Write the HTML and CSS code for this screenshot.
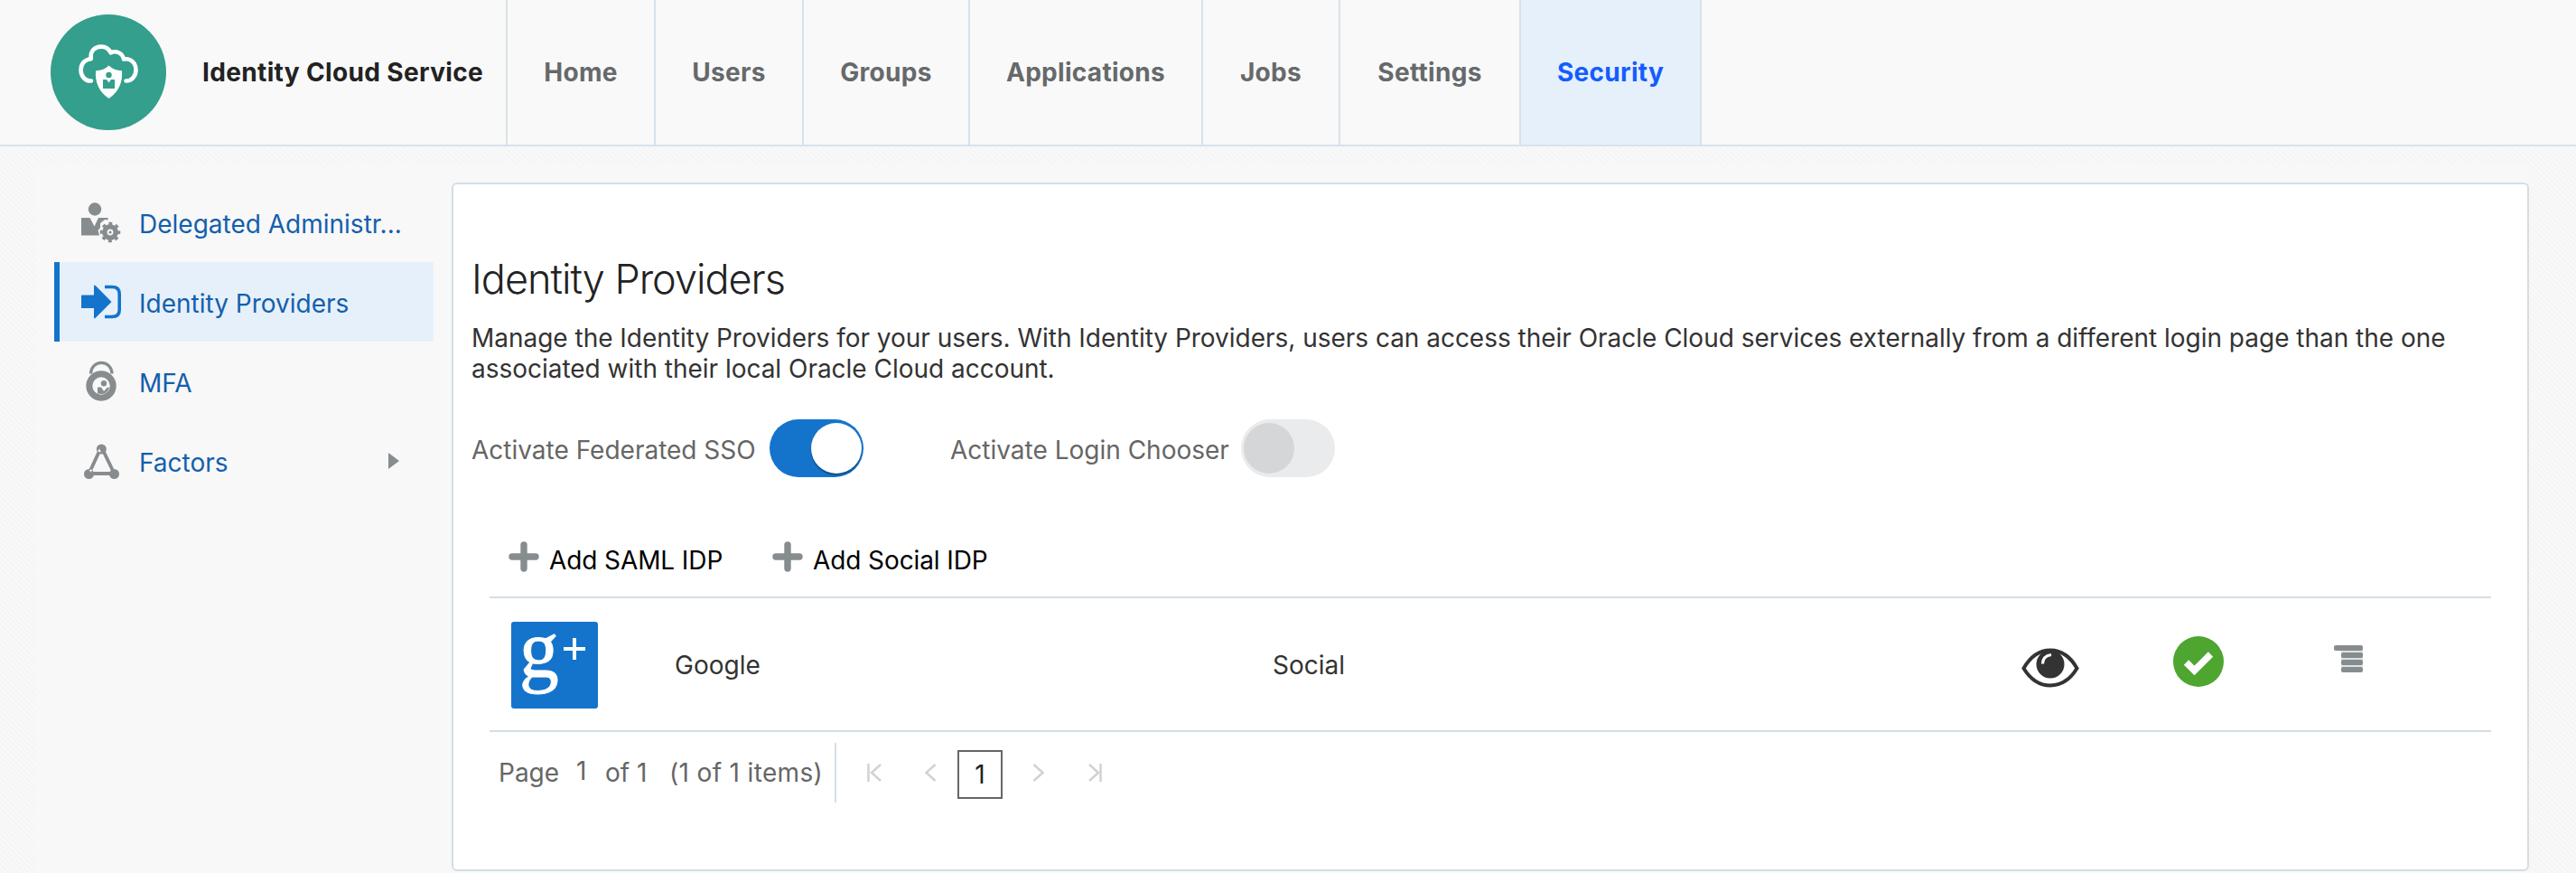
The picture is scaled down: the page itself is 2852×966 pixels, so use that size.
FILE: index.html
```html
<!DOCTYPE html>
<html lang="en">
<head>
<meta charset="utf-8">
<title>Identity Cloud Service</title>
<link rel="stylesheet" href="styles.css">
</head>
<body>
<header class="topbar">
  <div class="brand">
    <svg class="logo" viewBox="0 0 128 128">
      <circle cx="64" cy="64" r="64" fill="#339f8c"/>
      <path d="M45 73.500C38 74 33.500 68 33.500 61.500C33.500 54 38.500 49.500 44.800 49.200C43.500 41 48.500 35.600 56 35.600C61 35.600 64.500 38 66.500 42.300C72.500 39.500 79.500 42.500 81 49.500C89 48 94.500 54 94.500 61.500C94.500 68 90 73.500 83.500 73.500" fill="none" stroke="#fff" stroke-width="4.600" stroke-linecap="round" stroke-linejoin="round"/>
      <path d="M64.500 56.500Q70 62 79 62.200Q80.500 82 64.500 93Q48.500 82 50 62.200Q59 62 64.500 56.500Z" fill="#fff"/>
      <circle cx="64.500" cy="67" r="3.200" fill="#339f8c"/>
      <path d="M58 72H62L64.500 75.500L67 72H71V82H58Z" fill="#339f8c"/>
    </svg>
    <span class="brand-name">Identity Cloud Service</span>
  </div>
  <nav class="tabs">
    <a class="tab t-home"><span>Home</span></a>
    <a class="tab t-users"><span>Users</span></a>
    <a class="tab t-groups"><span>Groups</span></a>
    <a class="tab t-apps"><span>Applications</span></a>
    <a class="tab t-jobs"><span>Jobs</span></a>
    <a class="tab t-settings"><span>Settings</span></a>
    <a class="tab t-security active"><span>Security</span></a>
  </nav>
</header>
<div class="content">
  <aside class="sidebar">
    <a class="side-item">
      <svg class="side-icon" viewBox="0 0 44 44" fill="#878c8f">
        <circle cx="15" cy="7.500" r="7.200"/>
        <path d="M0 17H9.500L14.500 26.500L19 17H29.500V19.500L26 19L21 23V28L18.500 31L20 36.500H0Z"/>
        <circle cx="32" cy="33" r="6.200" fill="none" stroke="#878c8f" stroke-width="5.500"/>
        <circle cx="32" cy="33" r="9.300" fill="none" stroke="#878c8f" stroke-width="4" stroke-dasharray="3.650 3.650" stroke-dashoffset="1.800"/>
        <circle cx="32" cy="33" r="1.600"/>
      </svg>
      <span class="side-text">Delegated Administr...</span>
    </a>
    <a class="side-item selected">
      <svg class="side-icon" viewBox="0 0 44 44" fill="#1474cc">
        <path d="M0 15.500Q0 14.500 1 14.500H14V5Q14 2.500 16 4.300L33.500 22L16 39.500Q14 41.500 14 39V29H0Z"/>
        <path d="M26 5.500H34Q42.200 5.500 42.200 13V31Q42.200 38.500 34 38.500H26" fill="none" stroke="#1474cc" stroke-width="3.600"/>
      </svg>
      <span class="side-text">Identity Providers</span>
    </a>
    <a class="side-item">
      <svg class="side-icon" viewBox="0 0 44 44" fill="#878c8f">
        <path d="M10.500 13.500A11.700 12 0 0 1 34 13.500" fill="none" stroke="#878c8f" stroke-width="3.200"/>
        <circle cx="22" cy="27" r="13.200" fill="none" stroke="#878c8f" stroke-width="7"/>
        <circle cx="25" cy="24.200" r="3.200"/>
        <path d="M18 28.500H22L25 33L29 28.500L31 29Q29 35.500 23 36L18 35.500Z"/>
      </svg>
      <span class="side-text">MFA</span>
    </a>
    <a class="side-item">
      <svg class="side-icon" viewBox="0 0 44 44" fill="#878c8f">
        <path d="M21.500 8L8.500 36H36.500L23 8" fill="none" stroke="#878c8f" stroke-width="3.800"/>
        <circle cx="22.300" cy="9" r="5.500"/><circle cx="8.500" cy="36.500" r="5.500"/><circle cx="36.500" cy="36.500" r="5.500"/>
        <path d="M18 11.500L20 8.500L22 12.500ZM8.500 32L12 31.500L11 34.500Z" fill="#f8f8f8"/>
      </svg>
      <span class="side-text">Factors</span>
      <svg class="caret" viewBox="0 0 12 18"><path d="M0 0L12 9L0 18Z" fill="#878c8f"/></svg>
    </a>
  </aside>
  <main class="panel">
    <h1 class="heading"><span>Identity Providers</span></h1>
    <p class="intro"><span>Manage the Identity Providers for your users. With Identity Providers, users can access their Oracle Cloud services externally from a different login page than the one</span><br><span>associated with their local Oracle Cloud account.</span></p>
    <div class="switches">
      <span class="switch-label">Activate Federated SSO</span>
      <span class="switch on"><i class="thumb"></i></span>
      <span class="switch-label second">Activate Login Chooser</span>
      <span class="switch"><i class="thumb"></i></span>
    </div>
    <section class="listing">
      <div class="toolbar">
        <button class="add first"><svg class="plus" viewBox="0 0 32 32"><path d="M16 3V29M3 16H29" stroke="#878c8f" stroke-width="7.400" stroke-linecap="round"/></svg><span>Add SAML IDP</span></button>
        <button class="add"><svg class="plus" viewBox="0 0 32 32"><path d="M16 3V29M3 16H29" stroke="#878c8f" stroke-width="7.400" stroke-linecap="round"/></svg><span>Add Social IDP</span></button>
      </div>
      <div class="row">
        <svg class="gplus" viewBox="0 0 96 96">
          <rect width="96" height="96" rx="3" fill="#1474cc"/>
          <text class="gplus-g" transform="translate(9 61) scale(.96 1)">g</text>
          <path d="M70 18V42M58 30H82" fill="none" stroke="#fff" stroke-width="4"/>
        </svg>
        <span class="name">Google</span>
        <span class="type">Social</span>
        <svg class="eye" viewBox="0 0 64 44">
          <path d="M2.500 22.500Q14 2.500 32 2.500T61.500 22.500Q50 41.500 32 41.500T2.500 22.500Z" fill="#fff" stroke="#333" stroke-width="4"/>
          <circle cx="32" cy="18" r="15.500" fill="#333"/>
          <path d="M23.500 17.500Q23.500 9 33 7.500" stroke="#fff" stroke-width="3.200" fill="none"/>
        </svg>
        <svg class="check" viewBox="0 0 56 56"><circle cx="28" cy="28" r="28" fill="#4ea52f"/><path d="M14.500 29L23.500 38L41.500 20" fill="none" stroke="#fff" stroke-width="7.500"/></svg>
        <svg class="menu" viewBox="0 0 32 32"><path fill="#dfe1e2" d="M8 6H32V28H8Z"/><g fill="#878c8f"><rect y="1" width="32" height="6" rx="2"/><rect x="8" y="9" width="24" height="6" rx="2"/><rect x="8" y="17" width="24" height="6" rx="2"/><rect x="8" y="25" width="24" height="6" rx="2"/></g></svg>
      </div>
      <div class="pager">
        <span class="p-page">Page</span><span class="p-num">1</span><span class="p-of">of 1</span><span class="p-items">(1 of 1 items)</span>
        <span class="divider"></span>
        <svg class="nav-icon n-first" viewBox="0 0 16 20"><path d="M1.500 0V20M15 1L5 10L15 19" /></svg>
        <svg class="nav-icon n-prev" viewBox="0 0 12 20"><path d="M11.500 1L1.500 10L11.500 19"/></svg>
        <span class="current">1</span>
        <svg class="nav-icon n-next" viewBox="0 0 12 20"><path d="M.5 1L10.500 10L.5 19"/></svg>
        <svg class="nav-icon n-last" viewBox="0 0 16 20"><path d="M13.500 0V20M1 1L11 10L1 19"/></svg>
      </div>
    </section>
  </main>
</div>
</body>
</html>
```
FILE: styles.css
```css
* { box-sizing: border-box; }
html, body { margin: 0; height: 966px; overflow: hidden; }
body {
  font: 28px/34px Inter, "Liberation Sans", sans-serif;
  color: #333;
  background: repeating-linear-gradient(45deg, #f9f9f9 0 2px, #f5f5f5 2px 4px);
}
svg { display: block; flex: none; overflow: visible; }
span { white-space: nowrap; }
.topbar { display: flex; height: 162px; background: #f9f9f9; border-bottom: 2px solid #d8e2ea; }
.brand { display: flex; align-items: center; width: 560px; padding-left: 56px; flex: none; }
.logo { width: 128px; height: 128px; }
.brand-name { margin-left: 40px; font-weight: 700; color: #222; letter-spacing: 0.350px; }
.tabs { display: flex; }
.tab { display: flex; align-items: center; justify-content: center; border-left: 2px solid #d8e2ea; font-weight: 700; color: #66696b; letter-spacing: 0.300px; }
.t-home, .t-users { width: 164px; }
.t-groups { width: 184px; }
.t-apps { width: 258px; }
.t-jobs { width: 152px; }
.t-settings { width: 200px; }
.t-security { width: 202px; }
.tab.active { color: #145cff; background: #e6f0fa; border-right: 2px solid #d8e2ea; }

.content { display: flex; gap: 20px; width: 2760px; height: 784px; margin: 20px 0 0 40px; padding: 20px 0 0 20px; background: #f8f8f8; }
.sidebar { width: 420px; flex: none; }
.side-item { display: flex; align-items: center; height: 88px; padding: 0 38px 0 24px; border-left: 6px solid transparent; color: #145fad; }
.side-item.selected { background: #e6f0fa; border-left-color: #1474cc; }
.side-icon { width: 44px; height: 44px; margin-right: 20px; }
.side-text { padding-top: 4px; }
.caret { width: 12px; height: 18px; margin-left: auto; }

.panel { width: 2300px; height: 762px; padding: 0 40px 0 20px; background: #fff; border: 2px solid #d3dee6; border-radius: 6px; }
.heading { margin: 75px 0 0; font-weight: 300; font-size: 45px; line-height: 60px; color: #222; letter-spacing: -1px; }
.intro { margin: 18px 0 0; letter-spacing: -0.020px; }
.switches { display: flex; align-items: center; height: 64px; margin-top: 39px; color: #666; }
.switch { display: flex; align-items: center; width: 104px; height: 64px; margin-left: 15px; padding: 0 3px; border-radius: 32px; background: #eaebed; flex: none; }
.switch.on { background: #1474cc; justify-content: flex-end; padding-right: 2px; }
.switch-label { width: 315px; padding-top: 4px; }
.switch-label.second { margin-left: 96px; width: 307px; }
.thumb { width: 56px; height: 56px; border-radius: 50%; background: #d4d6d8; }
.on .thumb { background: #fff; box-shadow: 0 2px 2px rgba(0, 0, 0, .35); }

.listing { margin: 0 0 0 20px; padding-top: 72px; }
.toolbar { display: flex; height: 62px; border-bottom: 2px solid #d3dee6; padding-left: 22px; }
.add { display: flex; padding: 0; border: 0; background: none; font: inherit; color: #000; align-items: flex-start; letter-spacing: -0.100px; }
.add.first { width: 292px; }
.add span { margin: 3px 0 0 12px; }
.plus { width: 32px; height: 32px; }
.row { display: flex; height: 148px; border-bottom: 2px solid #d3dee6; padding: 26px 0 0 24px; }
.gplus { width: 96px; height: 96px; }
.gplus-g { font: 91px "Liberation Serif", serif; fill: #fff; stroke: #fff; stroke-width: 1; }
.name { width: 662px; margin: 31px 0 0 85px; }
.type { width: 829px; margin-top: 31px; }
.eye { width: 64px; height: 44px; margin-top: 29px; }
.check { width: 56px; height: 56px; margin: 16px 0 0 104px; }
.menu { width: 32px; height: 32px; margin: 25px 0 0 122px; }

.pager { display: flex; align-items: center; height: 92px; margin-top: -1px; padding-left: 10px; color: #666; }
.p-page { width: 86px; }
.p-num { width: 32px; padding-bottom: 4px; }
.p-of { width: 71px; }
.p-items { width: 183px; letter-spacing: 0.350px; }
.divider { width: 2px; height: 66px; background: #d6dfe7; }
.nav-icon { height: 20px; fill: none; stroke: #d0d2d3; stroke-width: 2.500; }
.n-first, .n-last { width: 16px; }
.n-prev, .n-next { width: 12px; }
.n-first { margin-left: 34px; }
.n-prev { margin-left: 48px; }
.current { display: flex; align-items: center; justify-content: center; width: 50px; height: 54px; margin: 4px 34px 0 24px; border: 2px solid #666; color: #222; }
.n-last { margin-left: 49px; }
```
